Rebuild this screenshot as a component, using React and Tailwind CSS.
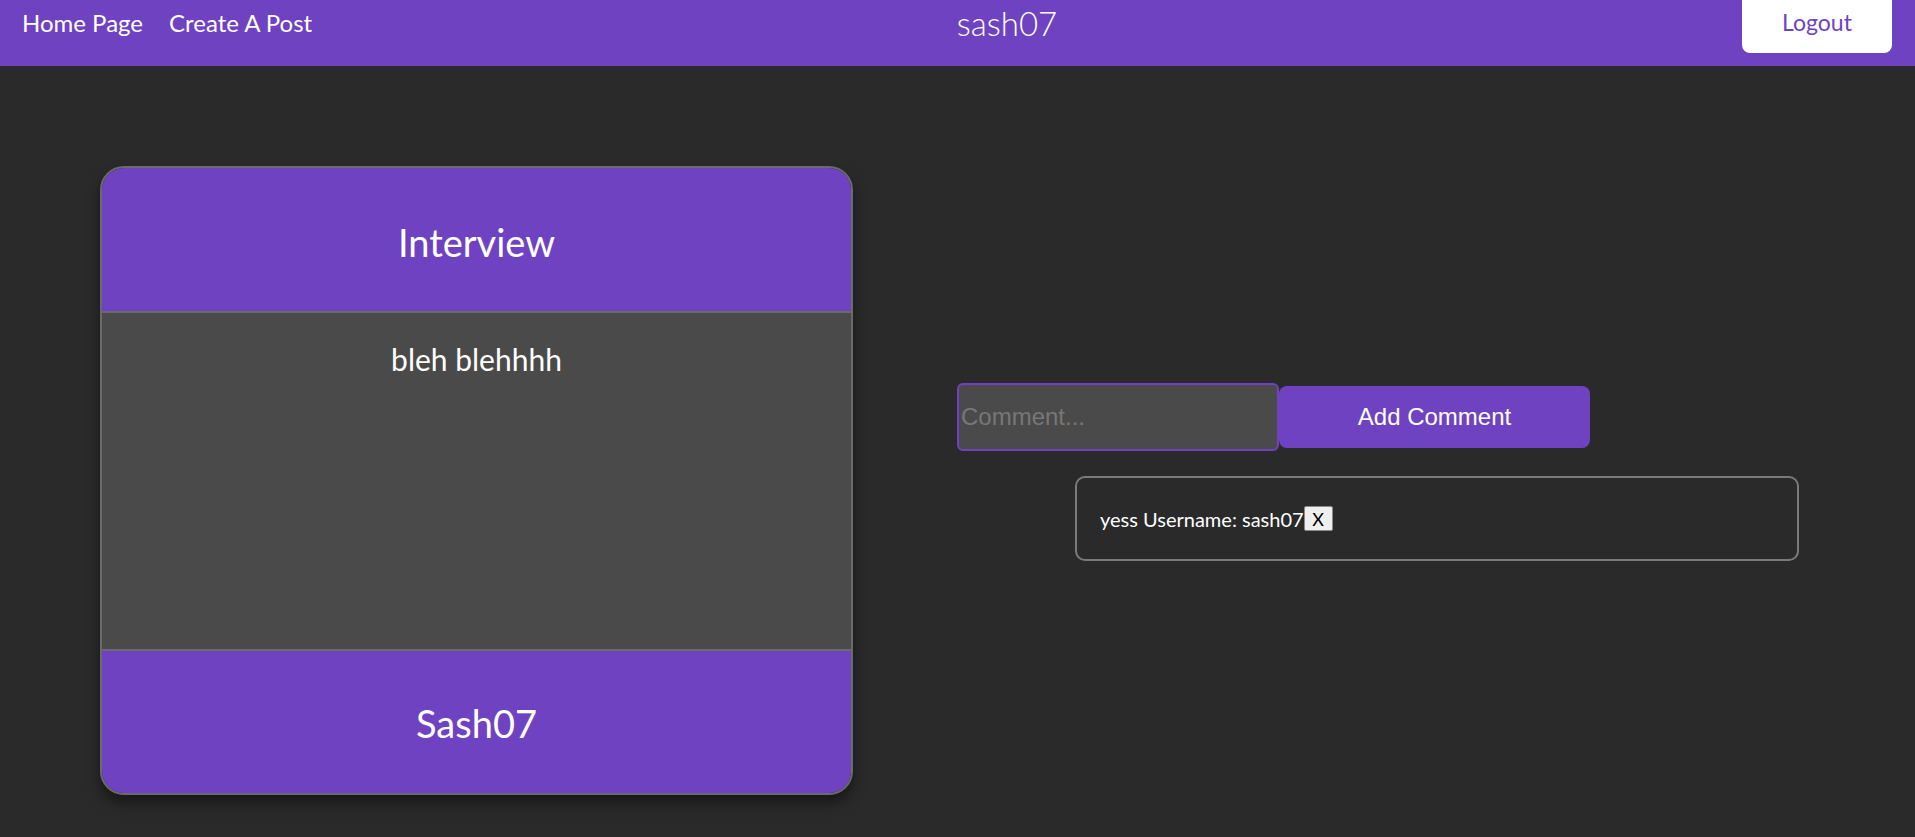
import React, { useState } from 'react';

const segoe = "font-['Segoe_UI',Lato,'Noto_Sans',sans-serif]";
const arial = "font-['Liberation_Sans',Arial,sans-serif]";

export default function App() {
  const [comment, setComment] = useState('');
  const [comments, setComments] = useState([{ id: 1, text: 'yess', username: 'sash07' }]);

  const addComment = () => {
    if (!comment.trim()) return;
    setComments(prev => [...prev, { id: prev.length + 1, text: comment, username: 'sash07' }]);
    setComment('');
  };

  return (
    <div className={`min-h-screen bg-[#2a2a2a] ${segoe}`}>
      {/* Navbar */}
      <nav className="h-[66px] bg-[#6f42c1] flex items-start pl-[22px] pr-[23px]">
        <div className="flex-1 flex gap-[26px] pt-[7px] text-[24px] leading-[32px] text-white">
          <a href="#">Home Page</a>
          <a href="#">Create A Post</a>
        </div>
        <h1 className="ml-[100px] pt-[3px] text-[33px] leading-[40px] font-light text-white">sash07</h1>
        <div className="flex-1 flex justify-end">
          <button className="w-[150px] h-[53px] pb-[9px] bg-white rounded-b-[8px] text-[23px] text-[#6f42c1]">
            Logout
          </button>
        </div>
      </nav>

      {/* Main */}
      <div className="flex items-start">
        {/* Post card */}
        <div className="ml-[100px] mt-[100px] w-[753px] h-[629px] border-2 border-[#6b6b6b] rounded-[24px] overflow-hidden shadow-[0_8px_14px_rgba(0,0,0,0.45)] flex flex-col">
          <div className="h-[145px] pt-[5px] bg-[#6f42c1] border-b-2 border-[#6b6b6b] flex items-center justify-center">
            <h2 className="text-[38px] text-white">Interview</h2>
          </div>
          <div className="flex-1 bg-[#4a4a4a] border-b-2 border-[#6b6b6b] pt-[26px] text-center">
            <p className="text-[30px] leading-[40px] text-white">bleh blehhhh</p>
          </div>
          <div className="h-[142px] pt-[3px] bg-[#6f42c1] flex items-center justify-center">
            <h3 className="text-[38px] text-white">Sash07</h3>
          </div>
        </div>

        {/* Comments */}
        <div className="ml-[104px] mt-[317px] flex flex-col">
          <div className="flex items-center">
            <input
              value={comment}
              onChange={e => setComment(e.target.value)}
              placeholder="Comment..."
              className={`w-[322px] h-[68px] px-[2px] bg-[#4a4a4a] border-2 border-[#6f42c1] rounded-[6px] text-[24px] text-white placeholder:text-[#777777] outline-none ${arial}`}
            />
            <button
              onClick={addComment}
              className={`w-[311px] h-[62px] bg-[#6f42c1] rounded-[8px] text-[24px] text-white ${arial}`}
            >
              Add Comment
            </button>
          </div>
          <div className="mt-[25px] ml-[118px] flex flex-col gap-3">
            {comments.map(c => (
              <div
                key={c.id}
                className="w-[724px] h-[85px] border-2 border-[#7a7a7a] rounded-[10px] flex items-center pl-[23px] text-[20px] text-white"
              >
                <span>
                  {c.text} Username: {c.username}
                </span>
                <button
                  onClick={() => setComments(prev => prev.filter(x => x.id !== c.id))}
                  className="w-[29px] h-[25px] bg-[#efefef] border border-[#8a8a8a] rounded-[2px] text-[18px] leading-none text-black"
                >
                  X
                </button>
              </div>
            ))}
          </div>
        </div>
      </div>
    </div>
  );
}
